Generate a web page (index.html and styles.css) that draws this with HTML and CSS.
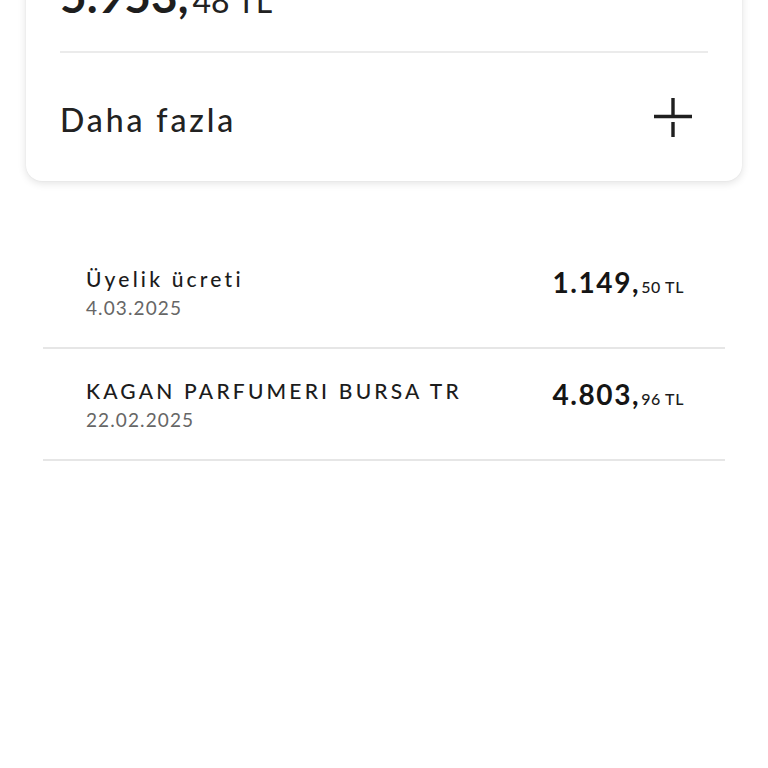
FILE: index.html
```html
<!DOCTYPE html>
<html lang="tr">
<head>
<meta charset="utf-8">
<link rel="stylesheet" href="styles.css">
</head>
<body>
<div class="page">
  <section class="card">
    <div class="total">
      <span class="total-main">5.953,</span><span class="total-sub">48 TL</span>
    </div>
    <div class="card-divider"></div>
    <div class="more">
      <span class="more-label">Daha fazla</span>
      <svg class="plus" width="40" height="40" viewBox="0 0 40 40" aria-hidden="true">
        <path d="M1 19.5H39M20 1V19.5M20 25V40" stroke="#1f1f1f" stroke-width="3.4" fill="none"/>
      </svg>
    </div>
  </section>

  <ul class="tx-list">
    <li class="tx">
      <div class="tx-info">
        <div class="tx-title">Üyelik ücreti</div>
        <div class="tx-date">4.03.2025</div>
      </div>
      <div class="tx-amount"><span class="amt-main">1.149,</span><span class="amt-sub">50 TL</span></div>
    </li>
    <li class="tx">
      <div class="tx-info">
        <div class="tx-title">KAGAN PARFUMERI BURSA TR</div>
        <div class="tx-date">22.02.2025</div>
      </div>
      <div class="tx-amount"><span class="amt-main">4.803,</span><span class="amt-sub">96 TL</span></div>
    </li>
  </ul>
</div>
</body>
</html>
```

FILE: styles.css
```css
* { box-sizing: border-box; }
html, body { margin: 0; padding: 0; background: #ffffff; }
body {
  font-family: "Lato", "Noto Sans", sans-serif;
  color: #1c1c1c;
  width: 768px;
  height: 768px;
  overflow: hidden;
}
.page { display: flex; flex-direction: column; }

.card {
  margin: -60px 26px 0 26px;
  background: #fff;
  border-radius: 16px;
  box-shadow: 0 2px 8px rgba(0,0,0,0.12), 0 0 2px rgba(0,0,0,0.06);
  padding: 0 34px;
}
.total {
  display: flex;
  align-items: baseline;
  line-height: 1;
  padding-top: 33px;
}
.total-main { font-size: 46px; font-weight: 700; color: #1e1e1e; }
.total-sub { font-size: 32px; font-weight: 400; margin-left: 4px; color: #222; }
.card-divider { height: 2px; background: #ebebeb; margin-top: 32px; }
.more {
  height: 128px;
  display: flex;
  align-items: center;
  justify-content: space-between;
  padding-top: 4px;
}
.more-label { font-size: 32px; font-weight: 500; color: #222; letter-spacing: 2.9px; }
.plus { margin-right: 15px; margin-bottom: 4px; }

.tx-list {
  list-style: none;
  margin: 56px 43px 0 43px;
  padding: 0;
}
.tx {
  display: flex;
  justify-content: space-between;
  align-items: flex-start;
  padding: 28px 41px 0 43px;
  border-bottom: 2px solid #e6e6e6;
  height: 112px;
}
.tx-title { font-size: 21px; font-weight: 500; color: #1c1c1c; line-height: 28px; letter-spacing: 3.2px; }
.tx-date { font-size: 19px; color: #666; line-height: 24px; margin-top: 3px; letter-spacing: 1.1px; }
.tx-amount { display: flex; align-items: baseline; }
.amt-main { font-size: 28px; font-weight: 700; color: #151515; letter-spacing: 1.6px; }
.amt-sub { font-size: 16px; font-weight: 500; margin-left: 1px; letter-spacing: 0.6px; }
```
